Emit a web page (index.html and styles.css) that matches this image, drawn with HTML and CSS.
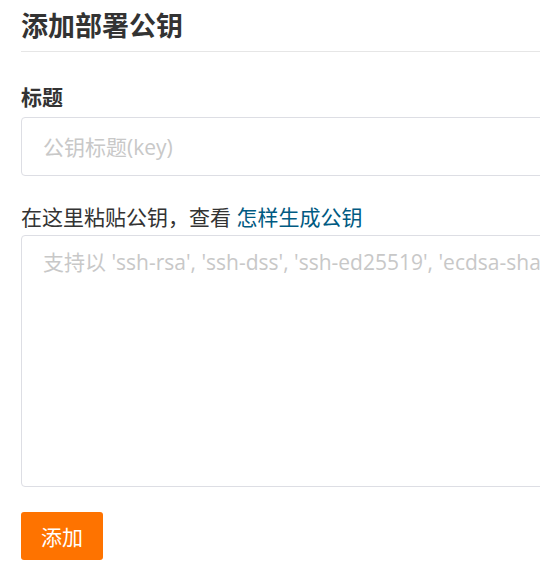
FILE: index.html
```html
<!DOCTYPE html>
<html lang="zh-CN">
<head>
<meta charset="utf-8">
<title>添加部署公钥</title>
<link rel="stylesheet" href="styles.css">
</head>
<body>
<div class="page">
  <h2 class="title">添加部署公钥</h2>
  <form class="form">
    <label class="label label-bold" for="key-title">标题</label>
    <input id="key-title" class="input" type="text" placeholder="公钥标题(key)">
    <label class="label" for="key-body">在这里粘贴公钥，查看 <a class="link" href="#">怎样生成公钥</a></label>
    <textarea id="key-body" class="textarea" placeholder="支持以 'ssh-rsa', 'ssh-dss', 'ssh-ed25519', 'ecdsa-sha2-nistp256', 'ecdsa-sha2-nistp384', 'ecdsa-sha2-nistp521' 开头"></textarea>
    <div class="actions">
      <button class="btn" type="button">添加</button>
    </div>
  </form>
</div>
</body>
</html>
```

FILE: styles.css
```css
html, body {
  margin: 0;
  padding: 0;
  background: #fff;
  overflow: hidden;
}
body {
  font-family: "Open Sans", "Noto Sans CJK SC", sans-serif;
  color: #333;
}
.page {
  width: 1400px;
  padding-left: 21px;
}
.title {
  margin: 0;
  padding: 8px 0 8px;
  line-height: 35px;
  font-size: 27px;
  font-weight: 700;
  color: #333;
  border-bottom: 1px solid #e6e6e6;
}
.form {
  display: flex;
  flex-direction: column;
  align-items: flex-start;
}
.label {
  display: block;
  font-size: 21px;
  line-height: 26px;
  margin: 28px 0 5px;
  color: #333;
}
.label-bold {
  font-weight: 700;
  margin: 32px 0 7px;
}
.link {
  color: #005a82;
  text-decoration: none;
}
.input, .textarea {
  box-sizing: border-box;
  width: 100%;
  border: 1px solid #dddee4;
  border-radius: 4px;
  padding: 0 21px;
  font-family: "Open Sans", "Noto Sans CJK SC", sans-serif;
  font-size: 21px;
  color: #333;
  background: #fff;
  outline: none;
}
.input {
  height: 59px;
}
.textarea {
  height: 252px;
  padding-top: 12px;
  line-height: 28px;
  resize: none;
}
.input::placeholder, .textarea::placeholder {
  color: #c8c8c8;
}
.actions {
  margin-top: 25px;
}
.btn {
  width: 82px;
  height: 48px;
  border: none;
  border-radius: 3px;
  background: #fe7300;
  color: #fff;
  font-family: "Open Sans", "Noto Sans CJK SC", sans-serif;
  font-size: 21px;
  padding: 0;
  cursor: pointer;
}
```
